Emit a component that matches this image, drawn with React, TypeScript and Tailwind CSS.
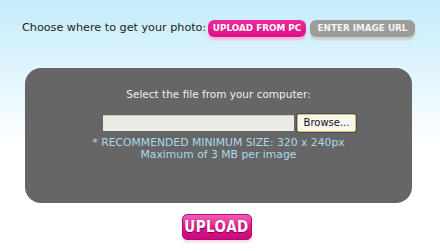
export default function App() {
  return (
    <div
      className="w-[440px] h-[251px] overflow-hidden bg-gradient-to-b from-[#c3ebfa] via-[#f2fbff] via-[45%] to-white to-[60%] flex flex-col"
      style={{ fontFamily: '"DejaVu Sans", Verdana, sans-serif' }}
    >
      {/* source selector */}
      <div className="flex items-start pt-[20px] pl-[22px] h-[68px]">
        <span className="w-[186px] text-[11.2px] leading-[14px] text-[#222] mt-[1px]">
          Choose where to get your photo:
        </span>
        <button className="h-[17px] w-[98px] rounded-[6px] bg-gradient-to-b from-[#ee2aa0] to-[#dd0a86] text-white text-[8.8px] font-bold leading-none shadow-[0_3px_2px_#f5b5dc]">
          UPLOAD FROM PC
        </button>
        <button className="ml-[4px] h-[17px] w-[105px] rounded-[6px] bg-[#9c9c9c] text-[#f4f4f4] text-[8.8px] font-bold leading-none shadow-[0_3px_2px_#cfcfcf]">
          ENTER IMAGE URL
        </button>
      </div>

      {/* file panel */}
      <div className="ml-[25px] w-[387px] h-[135px] rounded-[16px] bg-[#666666] flex flex-col items-center pt-[20px]">
        <p className="text-[10.5px] leading-[13px] text-[#efefef]">
          Select the file from your computer:
        </p>
        <div className="flex items-center mt-[13px] ml-[22px]">
          <div className="w-[191px] h-[16px] bg-[#ebebe4] border-t border-[#c9c9c0]" />
          <button className="ml-[3px] w-[59px] h-[18px] bg-[#f7f7f0] border border-[#e8b84a] rounded-[2px] text-[10px] text-[#111] leading-none shadow-[0_0_0_1px_#35506a]">
            Browse...
          </button>
        </div>
        <p className="mt-[5px] text-[10.8px] leading-[12px] text-[#a9d9ea] text-center">
          * RECOMMENDED MINIMUM SIZE: 320 x 240px
          <br />
          Maximum of 3 MB per image
        </p>
      </div>

      {/* submit */}
      <div className="flex justify-center pr-[7px] mt-[11px]">
        <button
          className="w-[70px] h-[26px] rounded-[5px] bg-gradient-to-b from-[#f25cb4] via-[#e0168e] to-[#c90a7a] border border-[#b8086f] text-white text-[15px] font-bold leading-none tracking-[0.5px] shadow-[0_2px_3px_#f3d3e6]"
          style={{ fontStretch: "condensed", textShadow: "0 1px 1px #7a0448" }}
        >
          UPLOAD
        </button>
      </div>
    </div>
  );
}
